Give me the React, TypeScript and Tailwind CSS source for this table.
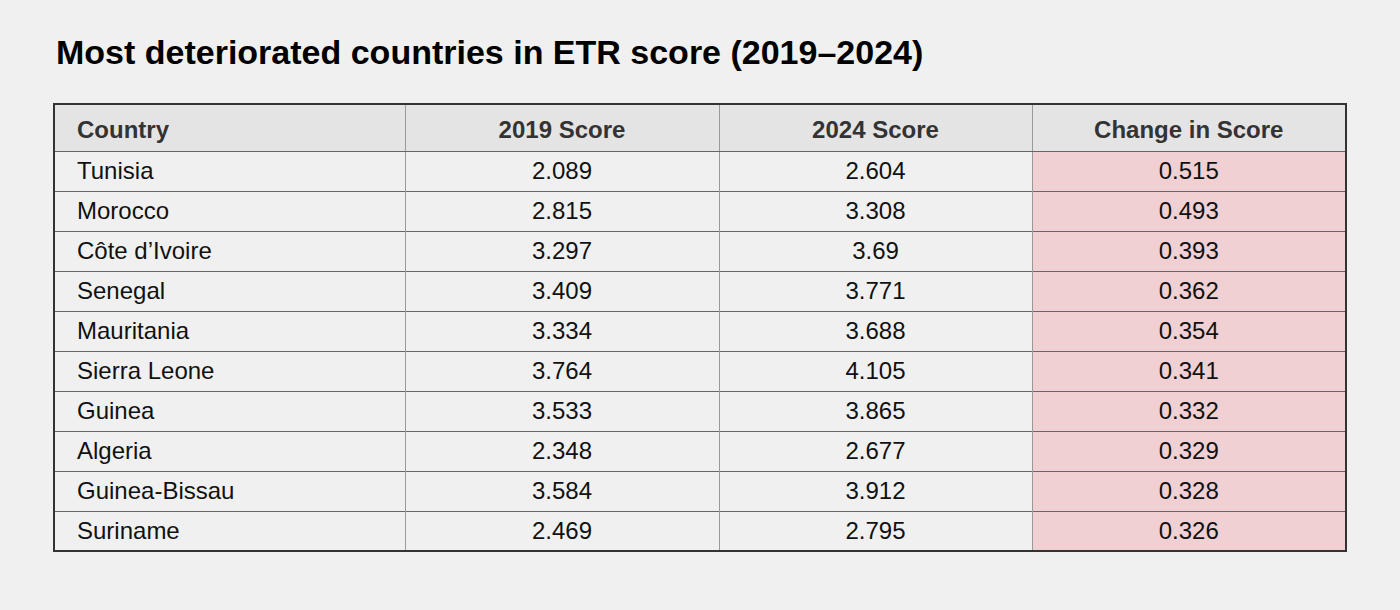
const rows: [string, string, string, string][] = [
  ["Tunisia", "2.089", "2.604", "0.515"],
  ["Morocco", "2.815", "3.308", "0.493"],
  ["Côte d’Ivoire", "3.297", "3.69", "0.393"],
  ["Senegal", "3.409", "3.771", "0.362"],
  ["Mauritania", "3.334", "3.688", "0.354"],
  ["Sierra Leone", "3.764", "4.105", "0.341"],
  ["Guinea", "3.533", "3.865", "0.332"],
  ["Algeria", "2.348", "2.677", "0.329"],
  ["Guinea-Bissau", "3.584", "3.912", "0.328"],
  ["Suriname", "2.469", "2.795", "0.326"],
];

export default function App() {
  return (
    <div
      className="h-[610px] w-[1400px] bg-[#f0f0f0] pl-[53px] pt-[32px]"
      style={{ fontFamily: '"Liberation Sans", Arial, sans-serif' }}
    >
      <h1 className="pl-[3px] text-[34px] font-bold leading-[40px] text-black">
        Most deteriorated countries in ETR score (2019–2024)
      </h1>
      <table className="mt-[31px] w-[1292px] table-fixed border-collapse border-2 border-[#333]">
        <colgroup>
          <col className="w-[351px]" />
          <col className="w-[314px]" />
          <col className="w-[313px]" />
          <col className="w-[314px]" />
        </colgroup>
        <thead>
          <tr className="h-[47px] bg-[#e4e4e4] text-[24px] font-bold leading-none text-[#333]">
            <th className="border-b border-[#666] pl-[22px] pt-[5px] text-left">Country</th>
            <th className="border-b border-l border-[#666] border-l-[#999] pt-[5px] text-center">2019 Score</th>
            <th className="border-b border-l border-[#666] border-l-[#999] pt-[5px] text-center">2024 Score</th>
            <th className="border-b border-l border-[#666] border-l-[#999] pt-[5px] text-center">Change in Score</th>
          </tr>
        </thead>
        <tbody className="text-[24px] leading-none text-[#111]">
          {rows.map(([c, a, b, d], i) => (
            <tr key={c} className="h-[40px]">
              <td className={`pl-[22px] ${i > 0 ? "border-t border-[#666]" : ""}`}>{c}</td>
              <td className={`border-l border-l-[#999] text-center ${i > 0 ? "border-t border-t-[#666]" : ""}`}>{a}</td>
              <td className={`border-l border-l-[#999] text-center ${i > 0 ? "border-t border-t-[#666]" : ""}`}>{b}</td>
              <td className={`border-l border-l-[#999] bg-[#f0d0d2] text-center ${i > 0 ? "border-t border-t-[#666]" : ""}`}>{d}</td>
            </tr>
          ))}
        </tbody>
      </table>
    </div>
  );
}
